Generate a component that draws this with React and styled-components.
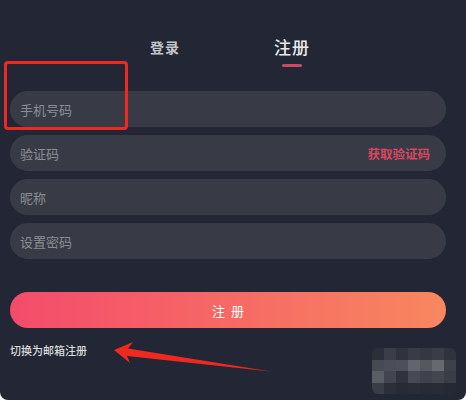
import React from "react";
import styled, { createGlobalStyle } from "styled-components";

const GlobalStyle = createGlobalStyle`
  html, body {
    margin: 0;
    padding: 0;
    background: #ffffff;
  }
  * { box-sizing: border-box; }
`;

const Card = styled.div`
  position: relative;
  width: 466px;
  height: 400px;
  background: #232735;
  border-radius: 0 0 8px 8px;
  overflow: hidden;
  font-family: "Noto Sans CJK SC", "Noto Sans", sans-serif;
  padding: 35px 20px 0 10px;
`;

const Tabs = styled.div`
  display: flex;
  align-items: flex-start;
  gap: 94px;
  padding-left: 140px;
  height: 56px;
`;

const Tab = styled.div`
  display: flex;
  flex-direction: column;
  align-items: center;
  font-size: ${(p) => (p.active ? "17px" : "14px")};
  line-height: 24px;
  font-weight: ${(p) => (p.active ? 500 : 700)};
  color: ${(p) => (p.active ? "#ebebee" : "#c4c6cc")};
  letter-spacing: 1px;
`;

const Underline = styled.span`
  display: block;
  width: 20px;
  height: 3px;
  margin-top: 5px;
  border-radius: 2px;
  background: #c9496a;
`;

const Form = styled.form`
  display: flex;
  flex-direction: column;
  gap: 8px;
`;

const Field = styled.div`
  display: flex;
  align-items: center;
  height: 36px;
  border-radius: 18px;
  background: #383b46;
  padding: 0 16px 0 10px;
`;

const Input = styled.input`
  flex: 1;
  min-width: 0;
  border: none;
  outline: none;
  background: transparent;
  font-family: inherit;
  font-size: 13px;
  color: #e0e0e4;
  padding: 0;
  &::placeholder {
    color: #8b8d95;
  }
`;

const CodeLink = styled.span`
  font-size: 12.5px;
  font-weight: 700;
  color: #d8465f;
`;

const Submit = styled.button`
  margin-top: 25px;
  height: 36px;
  border: none;
  border-radius: 18px;
  background: linear-gradient(90deg, #f34b6b 0%, #f8875f 100%);
  color: #ffffff;
  font-family: inherit;
  font-size: 13px;
  letter-spacing: 6px;
  text-indent: 6px;
`;

const SwitchLink = styled.div`
  margin-top: 14px;
  padding-left: 0;
  font-size: 11px;
  line-height: 16px;
  color: #d9dadd;
  font-weight: 500;
`;

const Highlight = styled.div`
  position: absolute;
  left: 4px;
  top: 61px;
  width: 124px;
  height: 69px;
  border: 3px solid #ec2a22;
  border-radius: 4px;
  pointer-events: none;
`;

const Arrow = styled.svg`
  position: absolute;
  left: 0;
  top: 0;
  pointer-events: none;
`;

const Mosaic = styled.div`
  position: absolute;
  left: 372px;
  top: 348px;
  display: grid;
  grid-template-columns: repeat(7, 12px);
  grid-auto-rows: 11.5px;
  border-radius: 6px;
  overflow: hidden;
`;

const Pixel = styled.div`
  background: ${(p) => p.color};
`;

const pixels = [
  "#2c2f3a", "#3b3e49", "#30333e", "#393c47", "#353843", "#3a3d47", "#30333e",
  "#474a55", "#4b4e59", "#4d505a", "#62656d", "#55585f", "#666970", "#3e414b",
  "#5a5d66", "#42454f", "#30333e", "#474a54", "#3f424c", "#43464f", "#3a3d47",
  "#3a3d47", "#2c2f3a", "#282b36", "#2a2d38", "#282b36", "#292c37", "#262935",
];

export default function App() {
  return (
    <>
      <GlobalStyle />
      <Card>
        <Tabs>
          <Tab>登录</Tab>
          <Tab active>
            注册
            <Underline />
          </Tab>
        </Tabs>
        <Form onSubmit={(e) => e.preventDefault()}>
          <Field>
            <Input placeholder="手机号码" />
          </Field>
          <Field>
            <Input placeholder="验证码" />
            <CodeLink>获取验证码</CodeLink>
          </Field>
          <Field>
            <Input placeholder="昵称" />
          </Field>
          <Field>
            <Input placeholder="设置密码" type="password" />
          </Field>
          <Submit type="submit">注册</Submit>
        </Form>
        <SwitchLink>切换为邮箱注册</SwitchLink>

        <Highlight />
        <Arrow width="466" height="400" viewBox="0 0 466 400">
          <polygon
            points="114,350 133,342 128,348.5 271,371.5 127,356 130,363"
            fill="#ee2a1f"
          />
        </Arrow>
        <Mosaic>
          {pixels.map((c, i) => (
            <Pixel key={i} color={c} />
          ))}
        </Mosaic>
      </Card>
    </>
  );
}
